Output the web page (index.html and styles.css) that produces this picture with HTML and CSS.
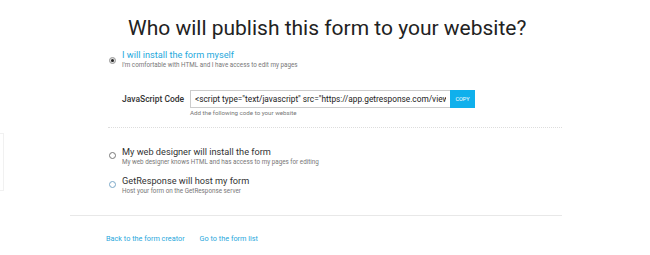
FILE: index.html
```html
<!doctype html>
<html>
  <head>
    <title>Publish form</title>
    <link rel="stylesheet" href="styles.css">
  </head>
  <body>
    <div class="side-box"></div>
    <div class="page">
      <h1 class="title">Who will publish this form to your website?</h1>

      <div class="option first">
        <span class="radio checked"></span>
        <div class="option-text">
          <div class="option-label active">I will install the form myself</div>
          <div class="option-hint">I'm comfortable with HTML and I have access to edit my pages</div>
        </div>
      </div>

      <div class="code-row">
        <span class="code-label">JavaScript Code</span>
        <div class="code-field">
          <div class="code-box">
            <input class="code-input" type="text" readonly value='&lt;script type="text/javascript" src="https://app.getresponse.com/view_webform.js?wid=1234567"&gt;&lt;/script&gt;'/>
            <span class="copy-btn">COPY</span>
          </div>
          <div class="code-hint">Add the following code to your website</div>
        </div>
      </div>

      <div class="dotted"></div>

      <div class="option second">
        <span class="radio"></span>
        <div class="option-text">
          <div class="option-label">My web designer will install the form</div>
          <div class="option-hint">My web designer knows HTML and has access to my pages for editing</div>
        </div>
      </div>

      <div class="option third">
        <span class="radio hover"></span>
        <div class="option-text">
          <div class="option-label">GetResponse will host my form</div>
          <div class="option-hint">Host your form on the GetResponse server</div>
        </div>
      </div>

      <div class="footer">
        <a href="#" class="link">Back to the form creator</a>
        <a href="#" class="link">Go to the form list</a>
      </div>
    </div>
  </body>
</html>
```

FILE: styles.css
```css
body {
  margin: 0;
  background: #fff;
  font-family: Roboto, "Liberation Sans", sans-serif;
  color: #333;
  width: 650px;
  height: 255px;
  overflow: hidden;
  position: relative;
}

.side-box {
  position: absolute;
  left: -4px;
  top: 133px;
  width: 6px;
  height: 56px;
  border: 1px solid #f1f1f1;
}

.page {
  width: 492px;
  margin-left: 70px;
}

.title {
  font-size: 21px;
  font-weight: 400;
  color: #222;
  margin: 14px 0 0 0;
  padding-left: 58px;
  line-height: 28px;
  white-space: nowrap;
}

.option {
  display: flex;
  align-items: flex-start;
  padding-left: 39px;
}

.option.first {
  margin-top: 6px;
}

.option.second {
  margin-top: 17px;
}

.option.third {
  margin-top: 7px;
}

.radio {
  width: 5px;
  height: 5px;
  border: 1px solid #777;
  border-radius: 50%;
  margin-top: 7px;
  margin-right: 6px;
  position: relative;
  flex-shrink: 0;
}

.radio.checked {
  background: #ddd;
  border-color: #999;
  margin-top: 9px;
}

.radio.checked::after {
  content: "";
  position: absolute;
  left: 1px;
  top: 1px;
  width: 3px;
  height: 3px;
  border-radius: 50%;
  background: #222;
}

.radio.hover {
  border-color: #7aa7c7;
}

.option-label {
  font-size: 9.2px;
  line-height: 13px;
  color: #333;
  white-space: nowrap;
}

.option-label.active {
  color: #1fa9dc;
}

.option-hint {
  font-size: 6.3px;
  line-height: 9px;
  color: #777;
  white-space: nowrap;
}

.code-row {
  display: flex;
  align-items: flex-start;
  margin-top: 20px;
  padding-left: 52px;
}

.code-label {
  font-size: 8.5px;
  font-weight: 500;
  color: #333;
  width: 68px;
  line-height: 18px;
  white-space: nowrap;
}

.code-field {
  display: flex;
  flex-direction: column;
}

.code-box {
  display: flex;
  height: 18px;
}

.code-input {
  width: 260px;
  height: 18px;
  margin: 0;
  border: 1px solid #ccc;
  border-right: none;
  border-radius: 0;
  font-family: Roboto, "Liberation Sans", sans-serif;
  font-size: 8.3px;
  padding: 0 4px;
  color: #222;
  box-sizing: border-box;
  outline: none;
}

.copy-btn {
  width: 25px;
  background: #10b0ec;
  color: #fff;
  font-size: 5.5px;
  text-align: center;
  line-height: 18px;
}

.code-hint {
  font-size: 6.2px;
  line-height: 9px;
  margin-top: 1px;
  color: #777;
}

.dotted {
  margin-left: 38px;
  margin-top: 9px;
  border-top: 1px dotted #ddd;
}

.footer {
  border-top: 1px solid #e8e8e8;
  margin-top: 19px;
  padding-top: 18px;
  padding-left: 36px;
  display: flex;
  gap: 15px;
}

.link {
  font-size: 7.3px;
  line-height: 10px;
  color: #2aa8dc;
  text-decoration: none;
}
```
